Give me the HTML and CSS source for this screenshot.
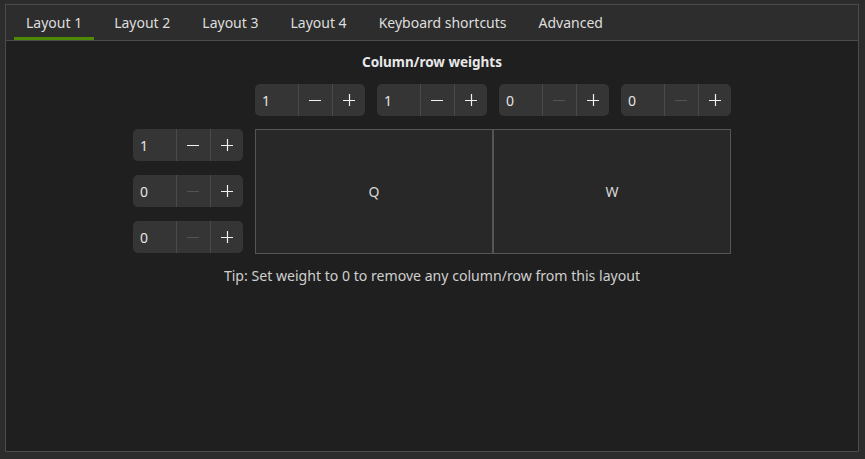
FILE: index.html
```html
<!DOCTYPE html>
<html>
<head>
<meta charset="utf-8">
<link rel="stylesheet" href="styles.css">
</head>
<body>
<div class="frame">
  <div class="tabbar">
    <div class="tab active">Layout 1</div>
    <div class="tab">Layout 2</div>
    <div class="tab">Layout 3</div>
    <div class="tab">Layout 4</div>
    <div class="tab">Keyboard shortcuts</div>
    <div class="tab">Advanced</div>
  </div>
  <div class="content">
    <div class="title">Column/row weights</div>
    <div class="editor">
      <div class="corner"></div>
      <div class="colspins">
        <div class="spin"><span class="val">1</span><span class="btn"><svg viewBox="0 0 12 12"><path d="M0 6.5H12"/></svg></span><span class="btn"><svg viewBox="0 0 12 12"><path d="M0 6.5H12M6.5 0V12"/></svg></span></div>
        <div class="spin"><span class="val">1</span><span class="btn"><svg viewBox="0 0 12 12"><path d="M0 6.5H12"/></svg></span><span class="btn"><svg viewBox="0 0 12 12"><path d="M0 6.5H12M6.5 0V12"/></svg></span></div>
        <div class="spin"><span class="val">0</span><span class="btn dis"><svg viewBox="0 0 12 12"><path d="M0 6.5H12"/></svg></span><span class="btn"><svg viewBox="0 0 12 12"><path d="M0 6.5H12M6.5 0V12"/></svg></span></div>
        <div class="spin"><span class="val">0</span><span class="btn dis"><svg viewBox="0 0 12 12"><path d="M0 6.5H12"/></svg></span><span class="btn"><svg viewBox="0 0 12 12"><path d="M0 6.5H12M6.5 0V12"/></svg></span></div>
      </div>
      <div class="rowspins">
        <div class="spin"><span class="val">1</span><span class="btn"><svg viewBox="0 0 12 12"><path d="M0 6.5H12"/></svg></span><span class="btn"><svg viewBox="0 0 12 12"><path d="M0 6.5H12M6.5 0V12"/></svg></span></div>
        <div class="spin"><span class="val">0</span><span class="btn dis"><svg viewBox="0 0 12 12"><path d="M0 6.5H12"/></svg></span><span class="btn"><svg viewBox="0 0 12 12"><path d="M0 6.5H12M6.5 0V12"/></svg></span></div>
        <div class="spin"><span class="val">0</span><span class="btn dis"><svg viewBox="0 0 12 12"><path d="M0 6.5H12"/></svg></span><span class="btn"><svg viewBox="0 0 12 12"><path d="M0 6.5H12M6.5 0V12"/></svg></span></div>
      </div>
      <div class="cells">
        <div class="cell">Q</div>
        <div class="cell">W</div>
      </div>
    </div>
    <div class="tip">Tip: Set weight to 0 to remove any column/row from this layout</div>
  </div>
</div>
</body>
</html>
```
FILE: styles.css
```css
html, body {
  margin: 0;
  padding: 0;
  background: #2c2c2c;
  font-family: "Noto Sans", "Open Sans", sans-serif;
  font-size: 14px;
  color: #dcdcdc;
}
.frame {
  margin: 4px 6px 0 5px;
  height: 446px;
  border: 1px solid #4b4b4b;
  background: #1f1f1f;
  display: flex;
  flex-direction: column;
}
.tabbar {
  height: 35px;
  background: #2d2d2d;
  border-bottom: 1px solid #4b4b4b;
  display: flex;
  gap: 8px;
  padding-left: 8px;
}
.tab {
  padding: 0 12px;
  display: flex;
  align-items: center;
  border-bottom: 3px solid transparent;
  padding-top: 3px;
  color: #dedede;
  white-space: nowrap;
}
.tab.active {
  border-bottom-color: #4e8a00;
}
.content {
  display: flex;
  flex-direction: column;
  align-items: center;
}
.title {
  margin-top: 12px;
  font-weight: bold;
  font-size: 13.5px;
  line-height: 18px;
  color: #e8e8e8;
}
.editor {
  margin-top: 13px;
  display: grid;
  grid-template-columns: 110px 476px;
  grid-template-rows: 32px 125px;
  column-gap: 12px;
  row-gap: 13px;
}
.colspins {
  display: flex;
  gap: 12px;
}
.rowspins {
  display: flex;
  flex-direction: column;
  gap: 14px;
}
.spin {
  width: 110px;
  height: 32px;
  flex: none;
  background: #353535;
  border-radius: 5px;
  display: flex;
  overflow: hidden;
}
.val {
  width: 44px;
  padding-left: 7px;
  box-sizing: border-box;
  display: flex;
  align-items: center;
  color: #e4e4e4;
  font-size: 14px;
}
.btn {
  width: 33px;
  border-left: 1px solid #4a4a4a;
  display: flex;
  align-items: center;
  justify-content: center;
}
.btn svg {
  width: 12px;
  height: 12px;
  fill: none;
  stroke: #f0f0f0;
  stroke-width: 1.2;
}
.btn.dis svg {
  stroke: #545454;
}
.cells {
  display: flex;
}
.cell {
  flex: 1;
  border: 1px solid #555555;
  background: #282828;
  display: flex;
  align-items: center;
  justify-content: center;
  color: #d8d8d8;
  font-size: 14px;
}
.tip {
  margin-top: 12px;
  line-height: 19px;
  color: #cfcfcf;
  font-size: 14.1px;
}
```
